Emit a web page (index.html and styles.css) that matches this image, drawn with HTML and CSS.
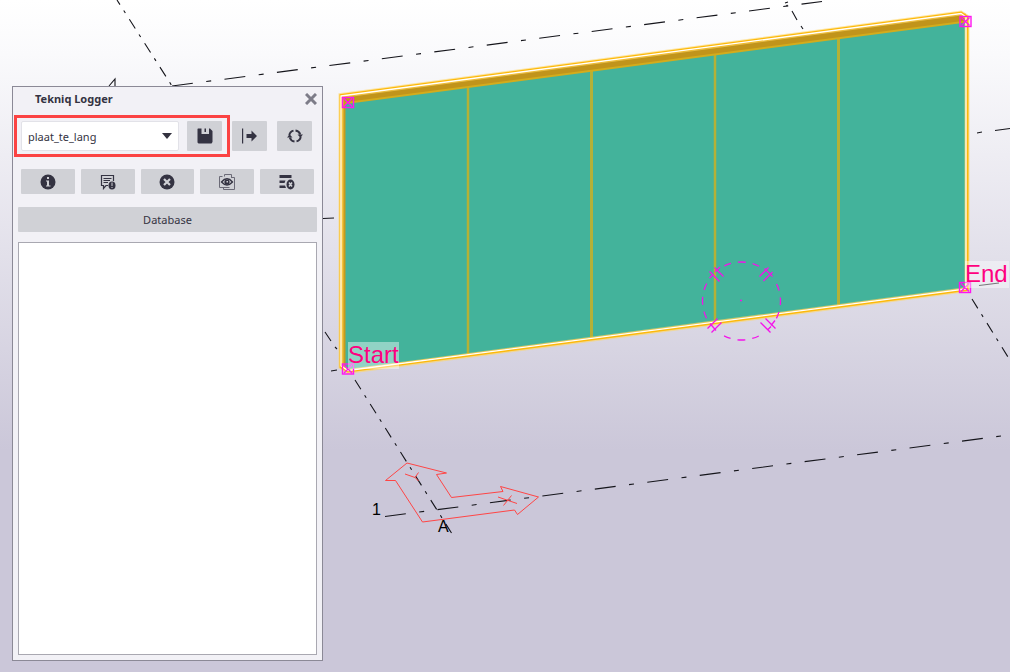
FILE: index.html
```html
<!DOCTYPE html>
<html lang="en">
<head>
<meta charset="utf-8">
<title>Tekniq Logger</title>
<link rel="stylesheet" href="styles.css">
</head>
<body>
<main class="viewport">
  <svg class="scene" viewBox="0 0 1010 672" preserveAspectRatio="xMinYMin slice" role="img" aria-label="Model view">
    <defs>
      <g id="handle">
        <rect x="-5.5" y="-5" width="11" height="10"/>
        <path d="M-4 -4L4 4M4 -4L-4 4"/>
      </g>
    </defs>

    <g class="grid-line">
      <path class="dash-steep" stroke-dashoffset="5.5" d="M117 0L172 86"/>
      <path class="dash-flat" d="M172 86L822 1.500"/>
      <path d="M785 3l3 -1M786.500 6l1 -1M792 11l5 9M801 26l2 3M977 133l5 -1M995 130.500L1010 128.500M323 218.500L334 218M325 332l6 9M335 347l2 2M331 371l6 -1M979 285.500L999 283M109 86L115 79V86"/>
      <path class="dash-steep" d="M355 380L451.500 533"/>
      <path class="dash-steep" d="M972 299L1008 357"/>
      <path class="dash-flat" d="M385 516.500L1001 436"/>
    </g>

    <polygon class="wall" points="343,98 966,16 966,288 345,370"/>
    <g class="joint">
      <path stroke-width="2.500" d="M468 86V354"/>
      <path stroke-width="3" d="M591.500 70V338"/>
      <path stroke-width="2.500" d="M715 54V321"/>
      <path stroke-width="3" d="M838.500 38V305"/>
    </g>
    <path class="rim-light" d="M342 102L966 20"/>
    <path class="rim" d="M342 99L966 17"/>
    <path class="rim-side" d="M344 100V369"/>
    <path class="glow" d="M341 95.500L961 13L967 17V289.500L348 371.500L341 367Z"/>
    <path class="edge" d="M341 95.500L961 13L967 17V289.500L348 371L341 367Z"/>
    <path class="edge-core" d="M341 96L961 13.500L966 17V289L348 370.500L341 366Z"/>

    <g class="probe">
      <circle class="probe-ring" cx="741.500" cy="301" r="39"/>
      <path d="M740 300.500h2M709.500 271.500l10 10M714.500 267.500l9 9M709.500 278l3.500 -3.500M715 272l5 -5M759.500 276.500l9 -9M763.500 281l9 -9M764.500 268.500l8 8M707.500 328.500l10 -10M711.500 332.500l10 -10M710 323.500l6 7M760.500 322.500l10 10M765.500 318.500l10 10M768 329.500l3 -3M771 325.500l4 -5"/>
    </g>

    <g class="axes">
      <path d="M407 463L446.500 473L436.500 474.500L451.500 497.500L503 491.500L500.500 486.500L538.500 497L517.500 514.500L514.500 510L422.500 522L395.500 480.500H385.500Z"/>
      <path d="M498 497L517 503.500M503.500 505.500L511.500 495.500M405 474L415 477.500M418.500 472.500L415 477.500L418.500 481"/>
    </g>
    <text class="axis-label" x="372" y="515">1</text>
    <text class="axis-label" x="438" y="532">A</text>

    <g class="handle">
      <use href="#handle" x="348" y="102.500"/>
      <use href="#handle" x="965.500" y="21.500"/>
      <use href="#handle" x="348" y="369"/>
      <use href="#handle" x="965" y="287.500"/>
    </g>
    <rect class="tag" x="348" y="342" width="51" height="27"/>
    <rect class="tag" x="965" y="261" width="44" height="27"/>
    <text class="tag-text" x="348" y="363">Start</text>
    <text class="tag-text" x="965" y="282">End</text>
  </svg>

  <section class="panel" aria-label="Tekniq Logger">
    <header class="title-bar">
      <h1 class="title">Tekniq Logger</h1>
      <button class="close" aria-label="Close">
        <svg width="12" height="12" viewBox="0 0 12 12"><path d="M1 1L11 11M11 1L1 11" stroke="#7d7c88" stroke-width="3"/></svg>
      </button>
    </header>

    <div class="toolbar">
      <div class="preset">
        <div class="combo">
          <select class="combo-select" aria-label="Preset"><option>plaat_te_lang</option></select>
          <svg class="combo-arrow" width="10" height="6" viewBox="0 0 10 6"><path d="M0 0H10L5 6Z" fill="#33323f"/></svg>
        </div>
        <button class="button square" aria-label="Save">
          <svg width="16" height="16" viewBox="0 0 16 16"><path fill="#343342" d="M1 0.500H4.500V6H12V0.500H13L15.500 3V14L14.500 15.500H1.500L0.500 14.500V1Z"/><path fill="#343342" d="M7.500 0.500H9V4H7.500Z"/></svg>
        </button>
      </div>
      <div class="actions">
        <button class="button square" aria-label="Export">
          <svg width="16" height="16" viewBox="0 0 16 16"><path fill="#343342" d="M0 0.500H1.200V15.500H0ZM4.500 6H9.500V2.500L15 8L9.500 13.500V10H4.500Z"/></svg>
        </button>
        <button class="button square" aria-label="Refresh">
          <svg width="16" height="16" viewBox="0 0 16 16"><g fill="none" stroke="#343342" stroke-width="2"><path d="M2.300 7.500A5.600 5.600 0 0 1 6.500 2.600M8.500 2.500A5.600 5.600 0 0 1 13.200 6.500M13.700 8.500A5.600 5.600 0 0 1 9.500 13.400M7.500 13.500A5.600 5.600 0 0 1 2.800 9.500"/></g><path fill="#343342" d="M10.500 6.500H16L13.300 9.500ZM0 9.500L2.700 6.500L5.500 9.500Z"/></svg>
        </button>
      </div>
    </div>

    <div class="filters">
      <button class="button" aria-label="Information">
        <svg width="16" height="16" viewBox="0 0 16 16"><circle cx="8" cy="8" r="7.500" fill="#343342"/><path fill="#d0d1d6" d="M7 3H9V5H7ZM6 6.500H9V11.500H10.500V12.500H6V11.500H7V7.500H6Z"/></svg>
      </button>
      <button class="button" aria-label="Messages">
        <svg width="16" height="16" viewBox="0 0 16 16"><path fill="none" stroke="#343342" stroke-width="1.200" d="M8 11.500H6L3.500 14.500V11.500H1.500V1.500H13.500V7M3.500 4.500H11.500M3.500 6.500H10M3.500 8.500H8"/><ellipse cx="12" cy="11.500" rx="3.500" ry="4" fill="#343342"/><path stroke="#d0d1d6" d="M12 8.500V12M12 13V14"/></svg>
      </button>
      <button class="button" aria-label="Errors">
        <svg width="16" height="16" viewBox="0 0 16 16"><circle cx="8" cy="8" r="7.500" fill="#343342"/><path d="M5 5L11 11M11 5L5 11" stroke="#d0d1d6" stroke-width="2.200"/></svg>
      </button>
      <button class="button" aria-label="Show in model">
        <svg width="16" height="16" viewBox="0 0 16 16"><path fill="none" stroke="#6b6a77" d="M5.500 2.500V0.500H12.500V3M3.500 2.500H0.500V13.500H4M4.500 13V15.500H15.500V3.500H12M10.500 13.500H5"/><path fill="#d0d1d6" stroke="#343342" stroke-width="1.300" d="M2.500 8Q8 1.500 13.500 8Q8 14 2.500 8Z"/><circle cx="8" cy="8" r="2.600" fill="#343342"/><path fill="#d0d1d6" d="M7.500 7H9V8.500H7.500Z"/></svg>
      </button>
      <button class="button" aria-label="Clear list">
        <svg width="16" height="16" viewBox="0 0 16 16"><path fill="#343342" d="M0.500 1H12.500V4H0.500ZM0.500 6.500H6.500L5.500 9H0.500ZM0.500 11.500H6L7 14H0.500Z"/><ellipse cx="11.500" cy="10.500" rx="4" ry="5" fill="#343342"/><path d="M10 8.500L13 12.500M13 8.500L10 12.500" stroke="#d0d1d6" stroke-width="1.500"/></svg>
      </button>
    </div>

    <button class="button database">Database</button>
    <div class="log" role="log" aria-label="Messages"></div>
  </section>
</main>
</body>
</html>
```

FILE: styles.css
```css
* { box-sizing: border-box; }

body {
  margin: 0;
  font-family: "Noto Sans", "Open Sans", sans-serif;
  font-size: 11px;
  color: #343342;
}

.viewport {
  position: relative;
  height: 100vh;
  min-height: 400px;
  overflow: hidden;
  background: linear-gradient(#ffffff 0%, #fafafc 8%, #cbc7d9 67%);
}

.scene {
  display: block;
  width: 100%;
  height: 100%;
}

.grid-line { fill: none; stroke: #15151b; stroke-width: 1.1; }
.dash-steep { stroke-dasharray: 11 7 3 7.400; }
.dash-flat { stroke-dasharray: 21 13.500 5 13.400; }

.wall { fill: #43b39b; }
.joint { stroke: #b5b136; fill: none; }
.rim { stroke: #c1941b; stroke-width: 7; }
.rim-light { stroke: #d4ac1c; stroke-width: 5; }
.rim-side { stroke: #c79b1b; stroke-width: 3; }
.glow { fill: none; stroke: #ffd766; stroke-opacity: 0.6; stroke-width: 5; }
.edge { fill: none; stroke: #fdb90b; stroke-width: 3; }
.edge-core { fill: none; stroke: #ffffff; stroke-width: 1.3; }

.probe { fill: none; stroke: #f412ea; stroke-width: 1.3; }
.probe-ring { stroke-dasharray: 8 7 7 25.260 7 7; stroke-dashoffset: 4; }

.axes { fill: none; stroke: #ff4545; stroke-width: 1; }
.axis-label { font-family: "Liberation Sans", Arial, sans-serif; font-size: 16px; fill: #000000; }

.handle { fill: none; stroke: #ff14f0; stroke-width: 1.4; }
.tag { fill: #ffffff; fill-opacity: 0.42; }
.tag-text { font-family: "Liberation Sans", Arial, sans-serif; font-size: 24px; fill: #ff0080; }

.panel {
  position: absolute;
  top: 86px;
  bottom: 11px;
  left: 12px;
  width: 311px;
  display: flex;
  flex-direction: column;
  background: #f2f1f6;
  border: 1px solid #8b8996;
}

.title-bar {
  display: flex;
  align-items: center;
  justify-content: space-between;
  height: 23px;
  padding: 0 5px 0 22px;
}

.title {
  margin: 0;
  font-size: 11px;
  font-weight: 700;
}

.close {
  display: flex;
  padding: 0;
  border: 0;
  background: none;
}

.toolbar {
  display: flex;
  align-items: center;
  gap: 2px;
  margin-top: 5px;
  padding: 0 10px 0 1px;
}

.preset {
  flex: 1;
  display: flex;
  gap: 8px;
  padding: 3px 5px 3px 4px;
  border: 3px solid #fb4343;
}

.combo {
  position: relative;
  flex: 1;
  display: flex;
}

.combo-select {
  appearance: none;
  width: 100%;
  height: 30px;
  padding: 0 24px 0 6px;
  border: 1px solid #e2e2e8;
  border-radius: 2px;
  background: #ffffff;
  color: inherit;
  font: inherit;
}

.combo-arrow {
  position: absolute;
  right: 7px;
  top: 12px;
  pointer-events: none;
}

.actions { display: flex; gap: 10px; }

.button {
  display: flex;
  align-items: center;
  justify-content: center;
  height: 25px;
  padding: 0;
  border: 0;
  border-radius: 1px;
  background: #d0d1d6;
  color: inherit;
  font: inherit;
}

.square { width: 35px; height: 30px; }

.filters {
  display: grid;
  grid-template-columns: repeat(5, 1fr);
  gap: 6px;
  margin-top: 12px;
  padding: 0 8px;
}

.database { margin: 13px 5px 0; flex: none; }

.log {
  flex: 1;
  margin: 10px 5px 5px;
  border: 1px solid #a9a8b1;
  background: #ffffff;
}
```
